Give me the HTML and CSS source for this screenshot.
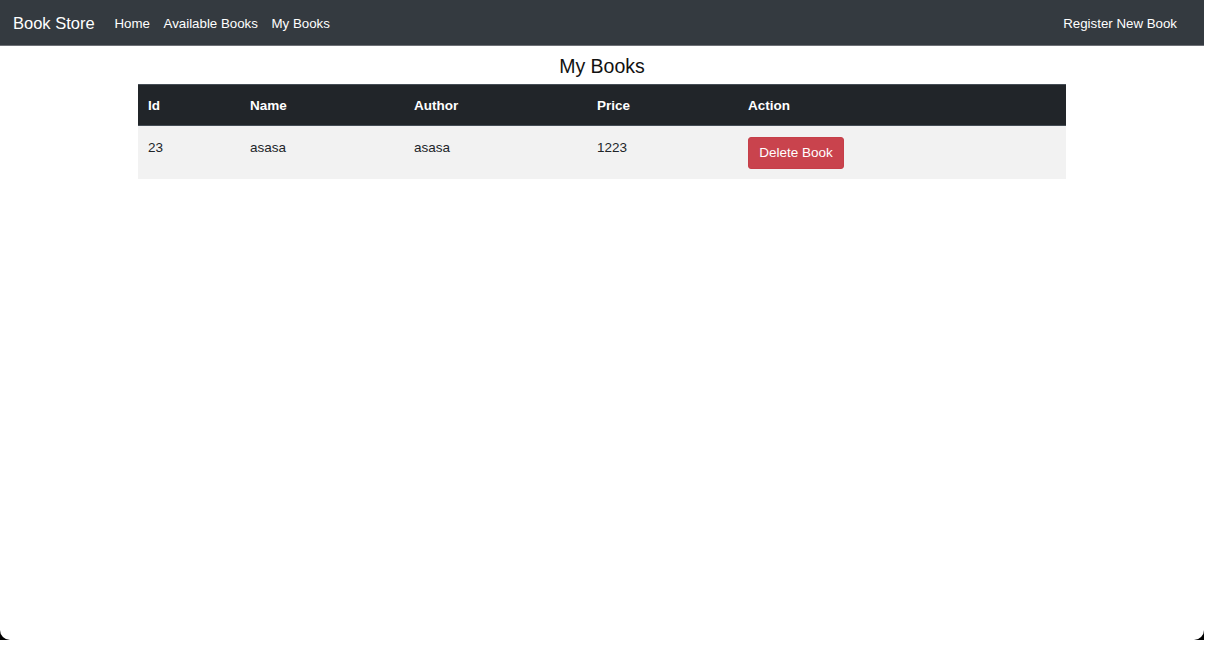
FILE: index.html
```html
<!DOCTYPE html>
<html>
<head>
<meta charset="utf-8">
<link rel="stylesheet" href="styles.css">
</head>
<body>
<div class="frame">
  <div class="window">
    <nav class="navbar">
      <a class="brand">Book Store</a>
      <ul class="nav-links">
        <li>Home</li>
        <li>Available Books</li>
        <li>My Books</li>
      </ul>
      <ul class="nav-links nav-right">
        <li>Register New Book</li>
      </ul>
    </nav>
    <main class="content">
      <h3 class="title">My Books</h3>
      <table class="books">
        <thead>
          <tr>
            <th class="c-id">Id</th>
            <th class="c-name">Name</th>
            <th class="c-author">Author</th>
            <th class="c-price">Price</th>
            <th class="c-action">Action</th>
          </tr>
        </thead>
        <tbody>
          <tr>
            <td>23</td>
            <td>asasa</td>
            <td>asasa</td>
            <td>1223</td>
            <td><button class="btn-danger">Delete Book</button></td>
          </tr>
        </tbody>
      </table>
    </main>
  </div>
</div>
</body>
</html>
```
FILE: styles.css
```css
* { box-sizing: border-box; }
html, body {
  margin: 0;
  padding: 0;
  background: #ffffff;
  font-family: "Liberation Sans", Arial, sans-serif;
  color: #212529;
}
.frame {
  width: 1204px;
  height: 640px;
  background: #000;
}
.window {
  width: 1204px;
  height: 640px;
  background: #ffffff;
  border-radius: 0 0 10px 10px;
  overflow: hidden;
}
.navbar {
  height: 46px;
  background: #343a40;
  border-bottom: 1px solid #6d7076;
  display: flex;
  align-items: center;
  padding: 2px 27px 0 13px;
}
.brand {
  color: #ffffff;
  font-size: 16.5px;
  margin-right: 13px;
}
.nav-links {
  list-style: none;
  margin: 0;
  padding: 0;
  display: flex;
}
.nav-links li {
  color: #ffffff;
  font-size: 13.3px;
  padding: 0 6.8px;
}
.nav-right { margin-left: auto; }
.nav-right li { padding-right: 0; }
.content {
  display: flex;
  flex-direction: column;
  align-items: center;
}
.title {
  margin: 8px 0 6px;
  font-size: 19.5px;
  font-weight: 400;
  line-height: 24px;
  color: #111;
}
.books {
  width: 928px;
  border-collapse: collapse;
  font-size: 13.5px;
}
.books th {
  background: #212529;
  color: #ffffff;
  font-weight: 700;
  text-align: left;
  padding: 11px 10px 10px;
  line-height: 19px;
  border-top: 1px solid #454d55;
  border-bottom: 1px solid #454d55;
}
.books td {
  background: #f2f2f2;
  text-align: left;
  vertical-align: top;
  padding: 12px 10px 10px;
  line-height: 20px;
}
.c-id { width: 102px; }
.c-name { width: 164px; }
.c-author { width: 183px; }
.c-price { width: 151px; }
.btn-danger {
  display: block;
  margin-top: -1px;
  background: #c9434d;
  color: #ffffff;
  border: 1px solid #c63f49;
  border-radius: 3px;
  font-family: "Liberation Sans", Arial, sans-serif;
  font-size: 13.5px;
  line-height: 20px;
  padding: 5px 10px;
  height: 32px;
  width: 96px;
}
```
